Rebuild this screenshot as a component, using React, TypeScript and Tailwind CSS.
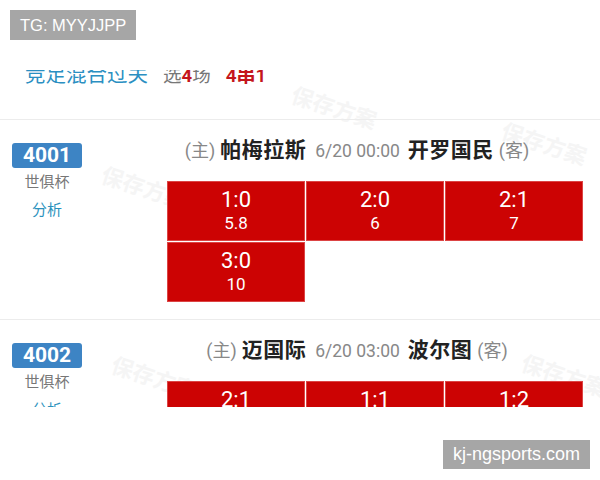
import React from "react";

type Match = {
  no: string;
  league: string;
  home: string;
  away: string;
  time: string;
  picks: { score: string; odds: string }[];
};

const matches: Match[] = [
  {
    no: "4001",
    league: "世俱杯",
    home: "帕梅拉斯",
    away: "开罗国民",
    time: "6/20 00:00",
    picks: [
      { score: "1:0", odds: "5.8" },
      { score: "2:0", odds: "6" },
      { score: "2:1", odds: "7" },
      { score: "3:0", odds: "10" },
    ],
  },
  {
    no: "4002",
    league: "世俱杯",
    home: "迈国际",
    away: "波尔图",
    time: "6/20 03:00",
    picks: [
      { score: "2:1", odds: "" },
      { score: "1:1", odds: "" },
      { score: "1:2", odds: "" },
    ],
  },
];

const font = { fontFamily: '"Roboto", "Noto Sans CJK SC", sans-serif' };

function Stamp({ className }: { className: string }) {
  return (
    <span
      className={`absolute text-[22px] font-bold text-[#f5f5f5] rotate-[18deg] select-none whitespace-nowrap ${className}`}
    >
      保存方案
    </span>
  );
}

function MatchBlock({ m }: { m: Match }) {
  return (
    <div className="flex border-b border-[#ececec] pb-[17px]">
      <div className="w-[94px] flex flex-col items-center pt-[23px]">
        <div className="w-[70px] h-[25px] rounded-[3px] bg-[#3d84c4] text-white text-[21px] font-bold leading-[25px] text-center">
          {m.no}
        </div>
        <div className="mt-[4px] text-[15px] leading-[20px] text-[#777]">{m.league}</div>
        <div className="mt-[8px] text-[15px] leading-[20px] text-[#2c92bd]">分析</div>
      </div>
      <div className="w-[506px] pl-[20px] pt-[18px]">
        <div className="flex items-baseline justify-center leading-[24px] whitespace-nowrap">
          <span className="text-[18px] text-[#888]">(主)</span>
          <span className="ml-[5px] text-[21px] font-bold text-[#222] tracking-[0.5px]">{m.home}</span>
          <span className="ml-[9px] text-[17.5px] text-[#888]">{m.time}</span>
          <span className="ml-[8px] text-[21px] font-bold text-[#222] tracking-[0.5px]">{m.away}</span>
          <span className="ml-[5px] text-[18px] text-[#888]">(客)</span>
        </div>
        <div className="ml-[53px] mt-[18px] w-[416px] grid grid-cols-3 gap-px">
          {m.picks.map((p, i) => (
            <div
              key={i}
              className="h-[60px] bg-[#cc0303] border border-[#dc4444] flex flex-col items-center pt-[7px] text-white"
            >
              <div className="text-[22px] leading-[22px]">{p.score}</div>
              <div className="mt-[2px] text-[17px] leading-[20px]">{p.odds}</div>
            </div>
          ))}
        </div>
      </div>
    </div>
  );
}

export default function App() {
  return (
    <div className="relative w-[600px] h-[480px] bg-white overflow-hidden" style={font}>
      <div className="absolute left-[10px] top-[10px] h-[30px] px-[10px] bg-[#a6a6a6] text-white text-[16.5px] leading-[30px] z-20"
        style={{ fontFamily: '"Liberation Sans", Arial, sans-serif' }}>
        TG: MYYJJPP
      </div>

      <div className="relative mt-[70px] h-[337px] overflow-hidden">
        <Stamp className="left-[290px] top-[22px]" />
        <Stamp className="left-[100px] top-[102px]" />
        <Stamp className="left-[500px] top-[58px]" />
        <Stamp className="left-[110px] top-[292px]" />
        <Stamp className="left-[520px] top-[290px]" />

        <div className="relative">
          <div className="h-[50px] flex flex-col border-b border-[#ececec]">
            <div className="-mt-[5px] pl-[25px] flex items-baseline leading-[20px] whitespace-nowrap">
              <span className="text-[20.5px] text-[#2b8fc2]">竞足混合过关</span>
              <span className="ml-[15px] text-[18.5px] text-[#777]">
                选<span className="font-bold text-[#c4161c]">4</span>场
              </span>
              <span className="ml-[15px] text-[19px] font-semibold text-[#c4161c]">4串1</span>
            </div>
          </div>
          {matches.map((m) => (
            <MatchBlock key={m.no} m={m} />
          ))}
        </div>
      </div>

      <div className="absolute left-[443px] top-[440px] h-[29px] w-[147px] bg-[#a6a6a6] text-white text-[18px] leading-[29px] text-center z-20"
        style={{ fontFamily: '"Liberation Sans", Arial, sans-serif' }}>
        kj-ngsports.com
      </div>
    </div>
  );
}
